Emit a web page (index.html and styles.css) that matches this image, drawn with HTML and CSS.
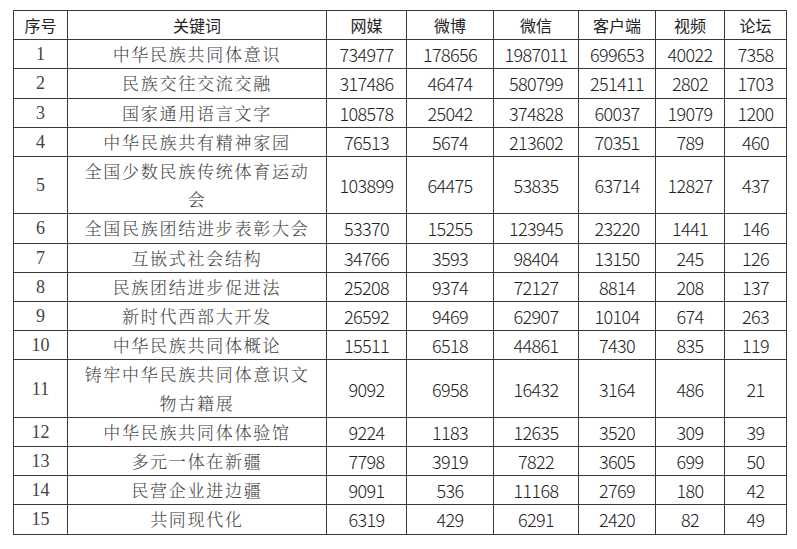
FILE: index.html
```html
<!DOCTYPE html>
<html lang="zh">
<head>
<meta charset="utf-8">
<title>关键词统计</title>
<link rel="stylesheet" href="styles.css">
</head>
<body>
<table class="data">
<colgroup>
<col class="c-no"><col class="c-kw"><col class="c-a"><col class="c-b"><col class="c-c"><col class="c-d"><col class="c-e"><col class="c-f">
</colgroup>
<thead>
<tr><th>序号</th><th>关键词</th><th>网媒</th><th>微博</th><th>微信</th><th>客户端</th><th>视频</th><th>论坛</th></tr>
</thead>
<tbody>
<tr><td class="no">1</td><td class="kw">中华民族共同体意识</td><td>734977</td><td>178656</td><td>1987011</td><td>699653</td><td>40022</td><td>7358</td></tr>
<tr><td class="no">2</td><td class="kw">民族交往交流交融</td><td>317486</td><td>46474</td><td>580799</td><td>251411</td><td>2802</td><td>1703</td></tr>
<tr><td class="no">3</td><td class="kw">国家通用语言文字</td><td>108578</td><td>25042</td><td>374828</td><td>60037</td><td>19079</td><td>1200</td></tr>
<tr><td class="no">4</td><td class="kw">中华民族共有精神家园</td><td>76513</td><td>5674</td><td>213602</td><td>70351</td><td>789</td><td>460</td></tr>
<tr><td class="no">5</td><td class="kw">全国少数民族传统体育运动会</td><td>103899</td><td>64475</td><td>53835</td><td>63714</td><td>12827</td><td>437</td></tr>
<tr><td class="no">6</td><td class="kw">全国民族团结进步表彰大会</td><td>53370</td><td>15255</td><td>123945</td><td>23220</td><td>1441</td><td>146</td></tr>
<tr><td class="no">7</td><td class="kw">互嵌式社会结构</td><td>34766</td><td>3593</td><td>98404</td><td>13150</td><td>245</td><td>126</td></tr>
<tr><td class="no">8</td><td class="kw">民族团结进步促进法</td><td>25208</td><td>9374</td><td>72127</td><td>8814</td><td>208</td><td>137</td></tr>
<tr><td class="no">9</td><td class="kw">新时代西部大开发</td><td>26592</td><td>9469</td><td>62907</td><td>10104</td><td>674</td><td>263</td></tr>
<tr><td class="no">10</td><td class="kw">中华民族共同体概论</td><td>15511</td><td>6518</td><td>44861</td><td>7430</td><td>835</td><td>119</td></tr>
<tr><td class="no">11</td><td class="kw">铸牢中华民族共同体意识文物古籍展</td><td>9092</td><td>6958</td><td>16432</td><td>3164</td><td>486</td><td>21</td></tr>
<tr><td class="no">12</td><td class="kw">中华民族共同体体验馆</td><td>9224</td><td>1183</td><td>12635</td><td>3520</td><td>309</td><td>39</td></tr>
<tr><td class="no">13</td><td class="kw">多元一体在新疆</td><td>7798</td><td>3919</td><td>7822</td><td>3605</td><td>699</td><td>50</td></tr>
<tr><td class="no">14</td><td class="kw">民营企业进边疆</td><td>9091</td><td>536</td><td>11168</td><td>2769</td><td>180</td><td>42</td></tr>
<tr><td class="no">15</td><td class="kw">共同现代化</td><td>6319</td><td>429</td><td>6291</td><td>2420</td><td>82</td><td>49</td></tr>
</tbody>
</table>
</body>
</html>
```

FILE: styles.css
```css
html, body {
  margin: 0;
  background: #ffffff;
}
body {
  padding: 10px 0 0 13px;
}
.data {
  border-collapse: collapse;
  table-layout: fixed;
  width: 773px;
  font-family: "Noto Sans CJK SC", "Liberation Sans", sans-serif;
  color: #222;
}
.c-no { width: 54px; }
.c-kw { width: 259px; }
.c-a { width: 80px; }
.c-b { width: 87px; }
.c-c { width: 85px; }
.c-d { width: 77px; }
.c-e { width: 69px; }
.c-f { width: 62px; }
.data th,
.data td {
  border: 1px solid #3a3a3a;
  padding: 0;
  text-align: center;
  line-height: 28.2px;
  vertical-align: middle;
}
.data th {
  font-weight: normal;
  font-size: 16px;
  color: #222;
}
.data td {
  font-size: 18px;
  font-weight: 300;
  letter-spacing: -0.6px;
}
.data td.no {
  font-family: "Liberation Serif", "Times New Roman", serif;
  font-size: 18px;
  font-weight: normal;
  color: #444;
  letter-spacing: 0;
}
.data td.kw {
  font-family: "Noto Serif CJK SC", "Noto Sans CJK SC", serif;
  font-size: 17px;
  letter-spacing: 1.75px;
  color: #444;
  padding: 0 8px;
  font-weight: 300;
}
```
